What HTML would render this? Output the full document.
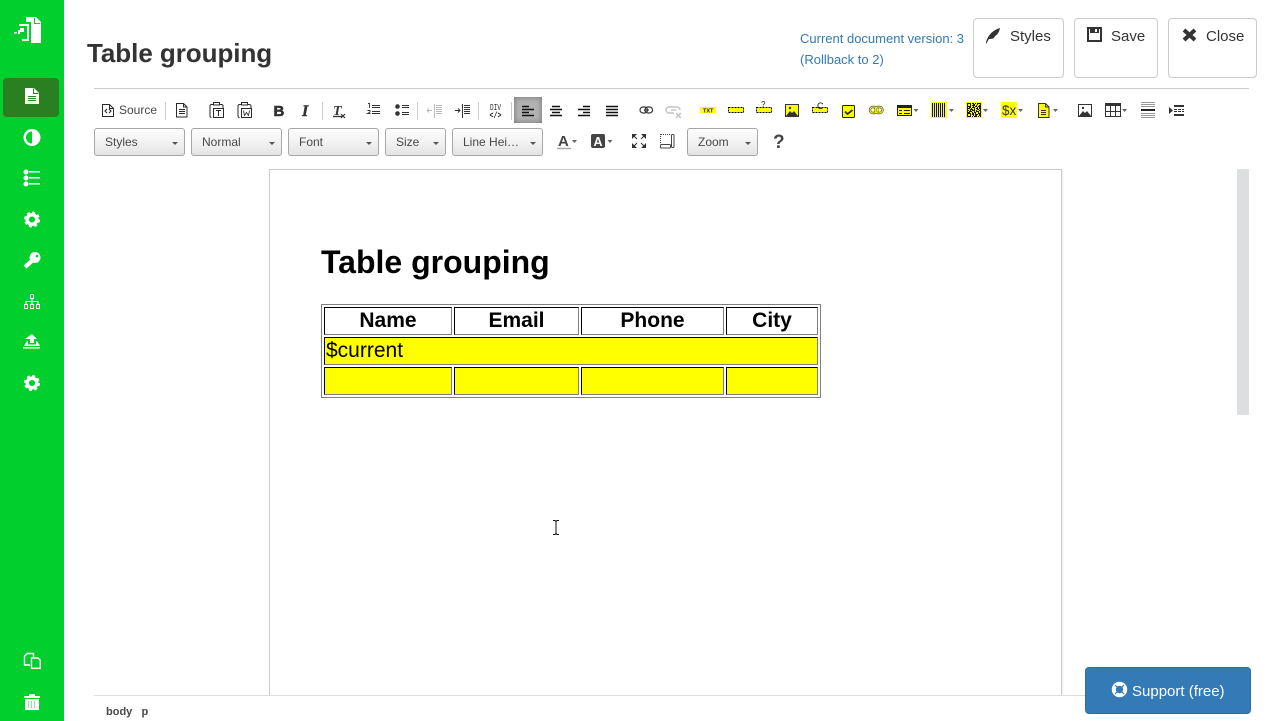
<!DOCTYPE html>
<html lang="en"><head><meta charset="utf-8"><title>Table grouping</title>
<style>
html,body{margin:0;padding:0;background:#fff;width:1272px;height:721px;overflow:hidden;font-family:"Liberation Sans",sans-serif}
.a{position:absolute}
#side{left:0;top:0;width:64px;height:721px;background:#00cf2d}
#act{left:3px;top:78px;width:56px;height:39px;background:#2a8020;border-radius:4px}
h1{position:absolute;margin:0;left:87px;top:37px;font-size:26px;line-height:32px;font-weight:bold;color:#333;letter-spacing:-.05px}
.ver{left:800px;color:#337ab7;font-size:13px;line-height:16px;white-space:nowrap}
.hb{position:absolute;top:18px;height:58px;border:1px solid #ccc;border-radius:4px;background:#fff;color:#333;font-size:15px;line-height:18px;box-sizing:content-box}
.hb span{position:absolute;top:9px}
.dd{position:absolute;top:128px;height:26px;border:1px solid #a6a6a6;border-radius:3px;background:linear-gradient(#fff,#e4e4e4);color:#484848;font-size:12px;line-height:26px;box-sizing:content-box}
.dd span{position:absolute;left:10px;top:0;white-space:nowrap}
.dd i{position:absolute;right:6px;top:13px;border:3px solid transparent;border-top:3px solid #555;border-bottom:0;width:0;height:0}
#pg{left:269px;top:169px;width:791px;height:526px;border:1px solid #ccc;border-bottom:0;background:#fff;box-shadow:1px 0 1px #eee}
#cov{left:64px;top:696px;width:1208px;height:25px;background:#fff}
#doc{position:absolute;margin:0;left:321px;top:244px;font-size:32px;line-height:37px;font-weight:bold;color:#000}
table.t{position:absolute;left:321px;top:304px;width:500px;height:94px;table-layout:fixed;border-collapse:separate;border-spacing:2px;border:1px solid #808080;box-sizing:border-box;font-size:21px;color:#000}
table.t td,table.t th{border:1px solid;border-color:#000 #808080 #808080 #000;padding:0 1px;height:26px;line-height:26px;overflow:hidden;box-sizing:content-box}
table.t .y{background:#ff0}
#sb{left:1237px;top:169px;width:12px;height:246px;background:#dddee0}
#bar{left:94px;top:695px;width:991px;height:1px;background:#ddd}
#top{left:94px;top:88px;width:1155px;height:1px;background:#ccc}
#path{left:106px;top:706px;font-size:11px;line-height:13px;font-weight:bold;color:#484848;white-space:pre}
#sup{left:1085px;top:667px;width:164px;height:45px;background:#337ab7;border:1px solid #2e6da4;border-radius:4px;color:#fff;font-size:15px;line-height:47px}
#sup span{position:absolute;left:46px;top:0;white-space:nowrap}
#src{left:119px;top:103px;font-size:12px;line-height:14px;color:#484848}
svg{position:absolute;left:0;top:0}
</style></head><body>
<div class="a" id="side"></div><div class="a" id="act"></div>
<h1>Table grouping</h1>
<div class="a ver" style="top:31px">Current document version: 3</div>
<div class="a ver" style="top:52px">(Rollback to 2)</div>
<div class="hb" style="left:973px;width:89px"><span style="left:36px">Styles</span></div>
<div class="hb" style="left:1074px;width:82px"><span style="left:36px">Save</span></div>
<div class="hb" style="left:1168px;width:87px"><span style="left:37px">Close</span></div>
<div class="a" id="top"></div>
<div class="a" id="src">Source</div>
<div class="a" style="left:514px;top:97px;width:28px;height:26px;background:#b2b2b2;box-shadow:inset 0 0 6px #6f6f6f"></div>
<div class="dd" style="left:94px;width:89px"><span>Styles</span><i></i></div>
<div class="dd" style="left:191px;width:89px"><span>Normal</span><i></i></div>
<div class="dd" style="left:288px;width:89px"><span>Font</span><i></i></div>
<div class="dd" style="left:385px;width:59px"><span>Size</span><i></i></div>
<div class="dd" style="left:452px;width:89px"><span>Line Hei…</span><i></i></div>
<div class="dd" style="left:687px;width:69px"><span>Zoom</span><i></i></div>
<div class="a" id="pg"></div>
<div class="a" id="cov"></div>
<h2 id="doc">Table grouping</h2>
<table class="t"><colgroup><col style="width:128px"><col style="width:125px"><col style="width:143px"><col style="width:92px"></colgroup>
<tr><th>Name</th><th>Email</th><th>Phone</th><th>City</th></tr>
<tr><td colspan="4" class="y">$current</td></tr>
<tr><td class="y">&nbsp;</td><td class="y">&nbsp;</td><td class="y">&nbsp;</td><td class="y">&nbsp;</td></tr></table>
<div class="a" id="sb"></div><div class="a" id="bar"></div>
<div class="a" id="path">body   p</div>
<div class="a" id="sup"><span>Support (free)</span></div>
<svg width="1272" height="721" viewBox="0 0 1272 721" font-family="Liberation Sans, sans-serif">
<!-- sidebar -->
<g fill="#fff">
<path d="M26 17h10l5 5v21H31V22h-5z"/><path d="M34.500 18v5.500h5.500" fill="none" stroke="#00cf2d"/>
<path d="M19 24h10v17H22v-2h5V26h-8z"/><path d="M20 28h4v4h-4zM18 30h2v4h-2zM14 32h3v1.500h-3z"/>
<path d="M25 88h9l5 5v11H25z"/><path d="M33.500 88.500v5h5M28 96.500h8M28 98.500h8M28 100.500h8" stroke="#2a8020" fill="none"/>
<path fill-rule="evenodd" d="M32 129a8.500 8.500 0 1 0 0 17 8.500 8.500 0 0 0 0-17zM32 131.500v12a6 6 0 0 1 0-12z"/>
<circle cx="26" cy="172" r="2.500"/><circle cx="26" cy="178" r="2.500"/><circle cx="26" cy="184" r="2.500"/>
<path d="M29 171h11v1.500H29zM29 177h11v1.500H29zM29 183h11v1.500H29z"/>
<g fill="none" stroke="#fff"><circle cx="32" cy="219.500" r="4.800" stroke-width="3.500"/><circle cx="32" cy="219.500" r="7" stroke-width="2" stroke-dasharray="3 2.500"/>
<circle cx="32" cy="383" r="4.800" stroke-width="3.500"/><circle cx="32" cy="383" r="7" stroke-width="2" stroke-dasharray="3 2.500"/></g>
<circle cx="35" cy="257.500" r="5.500"/><path d="M33.500 259.500l-8.500 7.500" stroke="#fff" stroke-width="4.200"/><circle cx="37" cy="256" r="1.300" fill="#00cf2d"/>
<g fill="none" stroke="#fff"><path d="M30.500 294.500h3v4h-3zM24.500 304.500h3v4h-3zM30.500 304.500h3v4h-3zM36.500 304.500h3v4h-3z"/><path d="M32 299v5M26 304v-2.500h12v2.500"/></g>
<path d="M32 334l5 5h-3v4h-4v-4h-5zM27 341h1v3.500h8V341h1l3 5H24z"/><path d="M23 347h17v1.500H23z"/>
<g fill="none" stroke="#fff" stroke-width="1.400"><path d="M30 665h-5.500v-9l3-2.500h6v4"/><path d="M31.500 658h6.500l2.300 2.300v8H31.500z"/></g>
<path d="M29 694h6v2h5v2H24v-2h5z"/><path d="M25 699h14v11H25z"/><path d="M28.500 701v7M31.500 701v7M34.500 701v7" stroke="#7fe896"/>
</g>
<!-- header buttons -->
<path d="M986 42c2-7 7-12 14-14-1 5-3 7-5 8l-1 2c-2 1-4 1-5 1l-3 5z" fill="#333"/>
<rect x="1088" y="28" width="13" height="13" fill="none" stroke="#333" stroke-width="2"/><path d="M1090 28h9v5h-9z" fill="#333"/><path d="M1095 29h2v3h-2z" fill="#fff"/>
<path d="M1184 30l11 10M1195 30l-11 10" stroke="#333" stroke-width="4"/>
<!-- toolbar: document -->
<g fill="none" stroke="#2a2a2a" stroke-width="1">
<path d="M102.500 104.500h7l4 4v8h-11zM109.500 104.500v4h4"/>
<path d="M107 109l-2 2 2 2M109 109l2 2-2 2" stroke-width="1.100"/>
<path d="M176.500 103.500h7l3.500 3.500v10h-10.500zM183.500 103.500v3.500h3.500M179 109.500h6M179 111.500h6M179 113.500h6"/>
<path d="M213 104.500h-1.500a1.500 1.500 0 0 0-1.500 1.500v10a1.500 1.500 0 0 0 1.500 1.500M220 104.500h1.500a1.500 1.500 0 0 1 1.500 1.500v2.500M213.500 102.500h6v2.500h-6zM213.500 108.500h10v9h-10z"/>
<path d="M216 110.500h5M218.500 110.500v5.500" />
<path d="M241 104.500h-1.500a1.500 1.500 0 0 0-1.500 1.500v10a1.500 1.500 0 0 0 1.500 1.500M248 104.500h1.500a1.500 1.500 0 0 1 1.500 1.500v2.500M241.500 102.500h6v2.500h-6zM241.500 108.500h10v9h-10z"/>
<path d="M243.500 110.500l1 5 2-3 2 3 1-5" stroke-width=".8"/>
</g>
<path d="M165.500 102v18M322.500 102v18M417.500 102v18M478.500 102v18M511.500 102v18" stroke="#ccc"/>
<text x="273.500" y="116" font-size="15" font-weight="bold" fill="#333" stroke="#333" stroke-width=".6">B</text>
<text x="302" y="116" font-size="16" font-weight="bold" font-style="italic" font-family="Liberation Serif, serif" fill="#333" stroke="#333" stroke-width=".4">I</text>
<text x="333" y="115" font-size="14" font-weight="bold" font-style="italic" font-family="Liberation Serif, serif" fill="#333">T</text>
<path d="M333 116.500h9" stroke="#333" stroke-width="1.300"/><path d="M341 114l4 4M345 114l-4 4" stroke="#333" stroke-width="1.200"/>
<path d="M372 105.500h8M372 107.500h8M372 111.500h8M372 113.500h8" stroke="#333" fill="none"/>
<path d="M368 103.500h1.500v4.500M367.500 110.500h2.500v1.500l-2.500 1.500h3" stroke="#333" fill="none" stroke-width=".9"/>
<circle cx="397.500" cy="106.500" r="2.300" fill="#333"/><circle cx="397.500" cy="113.500" r="2.300" fill="#333"/>
<path d="M402 105.500h7M402 107.500h7M402 112.500h7M402 114.500h7" stroke="#333"/>
<g stroke="#bbb" fill="none"><path d="M434.500 104v14M436 105.500h6M436 107.500h6M436 109.500h6M436 111.500h6M436 113.500h6M427 110.500h5M429 108.500l-2 2 2 2"/></g>
<g stroke="#333" fill="none"><path d="M462.500 104v14M464 105.500h6M464 107.500h6M464 109.500h6M464 111.500h6M464 113.500h6M455 110.500h5M458 108.500l2 2-2 2"/></g>
<text x="490" y="110" font-size="9" font-family="Liberation Mono, monospace" fill="#333" textLength="11" lengthAdjust="spacingAndGlyphs">DIV</text>
<text x="489.500" y="118" font-size="9" font-family="Liberation Mono, monospace" font-weight="bold" fill="#222" textLength="12" lengthAdjust="spacingAndGlyphs">&lt;/&gt;</text>
<g stroke="#111" stroke-width="1.500" fill="none">
<path d="M522 106.500h7M522 109.500h12M522 112.500h7M522 115.500h12"/>
<path d="M552 106.500h8M550 109.500h12M552 112.500h8M550 115.500h12"/>
<path d="M583 106.500h7M578 109.500h12M583 112.500h7M578 115.500h12"/>
<path d="M606 106.500h12M606 109.500h12M606 112.500h12M606 115.500h12"/>
</g>
<g fill="none" stroke="#333" stroke-width="1.200"><rect x="640" y="107" width="7.500" height="6" rx="3"/><rect x="645" y="107" width="7.500" height="6" rx="3"/><path d="M644 110h5"/></g>
<g fill="none" stroke="#c4c4c4" stroke-width="1.500"><path d="M674 113h-5a3 3 0 0 1 0-6h8a3 3 0 0 1 3 3M671 110h5M676 113l5 5M681 113l-5 5"/></g>
<!-- yellow widgets -->
<rect x="700" y="107" width="16" height="6" fill="#ff0"/><text x="703" y="112.500" font-size="5.500" font-weight="bold" fill="#111">TXT</text>
<g fill="#ff0" stroke="#000" stroke-dasharray="2 1"><rect x="728.500" y="107.500" width="15" height="5"/><rect x="756.500" y="107.500" width="15" height="5"/><rect x="812.500" y="107.500" width="15" height="5"/></g>
<text x="761" y="107" font-size="8" fill="#111">?</text>
<text x="817" y="109" font-size="9" fill="#111">C</text>
<rect x="785.500" y="104.500" width="13" height="12" fill="#ff0" stroke="#333"/><path d="M786 116l4-5 2 2 2-2 4 5z" fill="#333"/><circle cx="790" cy="108" r="1.200" fill="#333"/>
<rect x="842.500" y="105.500" width="12" height="12" rx="1" fill="#ff0" stroke="#222"/><path d="M845 111.500l2.500 2.500 5-4" fill="none" stroke="#333" stroke-width="1.800"/>
<g fill="none" stroke="#555" stroke-width="2.400"><rect x="870" y="107" width="7.500" height="6" rx="3"/><rect x="875" y="107" width="7.500" height="6" rx="3"/></g>
<g fill="none" stroke="#ff0" stroke-width="1"><rect x="870" y="107" width="7.500" height="6" rx="3"/><rect x="875" y="107" width="7.500" height="6" rx="3"/><path d="M873 110h7"/></g>
<rect x="897.500" y="105.500" width="14" height="10" fill="#ff0" stroke="#222"/><path d="M897 106h15v2h-15z" fill="#222"/><path d="M899 110h3v1h-3zM899 113h3v1h-3zM904 110h6v1h-6zM904 113h6v1h-6z" fill="#222"/>
<rect x="931" y="102" width="16" height="16" fill="#ff0"/><path d="M932.500 103v14M934.500 103v14M936.500 103v14M938.500 103v14M940.500 103v14M942.500 103v14M944.500 103v14" stroke="#111"/>
<rect x="966" y="102" width="16" height="16" fill="#ff0"/>
<g stroke="#111" fill="none">
<path d="M967 103.500h14" stroke-dasharray="4 1 2 1 1 1 4"/>
<path d="M967 104.500h14" stroke-dasharray="1 2 1 2 2 2 1 2 1"/>
<path d="M967 105.500h14" stroke-dasharray="1 2 1 1 3 1 1 2 2"/>
<path d="M967 106.500h14" stroke-dasharray="4 2 1 1 2 1 3"/>
<path d="M967 107.500h14" stroke-dasharray="1 1 2 1 3 2 1 1 2"/>
<path d="M967 108.500h14" stroke-dasharray="3 1 1 2 1 1 2 1 2"/>
<path d="M967 109.500h14" stroke-dasharray="1 2 3 1 1 2 2 1 1"/>
<path d="M967 110.500h14" stroke-dasharray="2 1 1 1 3 1 1 2 2"/>
<path d="M967 111.500h14" stroke-dasharray="1 1 3 2 1 1 3 1 1"/>
<path d="M967 112.500h14" stroke-dasharray="3 2 1 1 2 2 1 1 1"/>
<path d="M967 113.500h14" stroke-dasharray="4 1 2 1 1 2 3"/>
<path d="M967 114.500h14" stroke-dasharray="1 2 1 1 2 1 3 1 2"/>
<path d="M967 115.500h14" stroke-dasharray="1 2 1 2 1 1 2 2 2"/>
<path d="M967 116.500h14" stroke-dasharray="4 1 1 1 3 1 1 1 1"/>
</g>
<rect x="1001" y="102" width="16" height="16" fill="#ff0"/><text x="1002" y="115" font-size="13.500" fill="#333">$x</text>
<path d="M1038.500 103.500h7l3.500 3.500v10.500h-10.500z" fill="#ff0" stroke="#333"/><path d="M1045.500 103.500v3.500h3.500M1041 110.500h5M1041 112.500h5M1041 114.500h5" stroke="#333" fill="none"/>
<rect x="1078.500" y="104.500" width="13" height="12" fill="#fff" stroke="#333"/><path d="M1079 116l4-5 2 2 2-2 4 5z" fill="#333"/><circle cx="1083" cy="108" r="1.200" fill="#333"/>
<rect x="1105.500" y="103.500" width="15" height="13" fill="#fff" stroke="#333"/><path d="M1105 103h16v3h-16z" fill="#333"/><path d="M1105 111.500h16M1110.500 106v11M1115.500 106v11" stroke="#333"/>
<path d="M1141 102.500h14M1141 104.500h14M1141 106.500h14M1141 113.500h14M1141 115.500h14M1141 117.500h14" stroke="#999"/><path d="M1141 110h14" stroke="#222" stroke-width="2"/>
<path d="M1169 107l4 3.500-4 3.500z" fill="#333"/><path d="M1174 106h10M1174 115h10" stroke="#333" stroke-width="2"/><path d="M1174 109.500h10M1174 111.500h10" stroke="#333" stroke-dasharray="3 1"/>
<g fill="#666"><path d="M913.500 109h5l-2.500 3zM949 109h5l-2.500 3zM983 109h5l-2.500 3zM1018 109h5l-2.500 3zM1053 109h5l-2.500 3zM1122 109h5l-2.500 3zM572 140h5l-2.500 3zM607.500 140h5l-2.500 3z"/></g>
<!-- row 2 -->
<text x="558" y="146" font-size="15" font-weight="bold" fill="#444">A</text><path d="M557 148.500h14" stroke="#aaa" stroke-width="1.500"/>
<rect x="591" y="134" width="14" height="14" rx="2" fill="#444"/><text x="593.500" y="146" font-size="12.500" font-weight="bold" fill="#fff">A</text>
<path d="M632 134h5l-5 5zM646 134v5l-5-5zM632 148v-5l5 5zM646 148h-5l5-5z" fill="#333"/><path d="M634 136l3 3M644 136l-3 3M634 146l3-3M644 146l-3-3" stroke="#333"/>
<path d="M660.500 134v10M661 134.500h9" stroke="#444" stroke-dasharray="1 1" fill="none"/><rect x="660.500" y="144.500" width="10" height="3.500" rx="1" fill="none" stroke="#444"/><rect x="671.500" y="134.500" width="2.500" height="13" rx="1" fill="none" stroke="#444"/>
<text x="773" y="148" font-size="19" font-weight="bold" fill="#444">?</text>
<!-- cursor -->
<path d="M553 520.500h2l1 1 1-1h2M556 521.500v12M553 534.500h2l1-1 1 1h2" fill="none" stroke="#111"/>
<!-- support icon -->
<circle cx="1119.500" cy="689.500" r="5.700" fill="none" stroke="#fff" stroke-width="4"/><path d="M1115 685l3 3M1124 685l-3 3M1115 694l3-3M1124 694l-3-3" stroke="#337ab7" stroke-width="1.200"/>
</svg>
</body></html>
